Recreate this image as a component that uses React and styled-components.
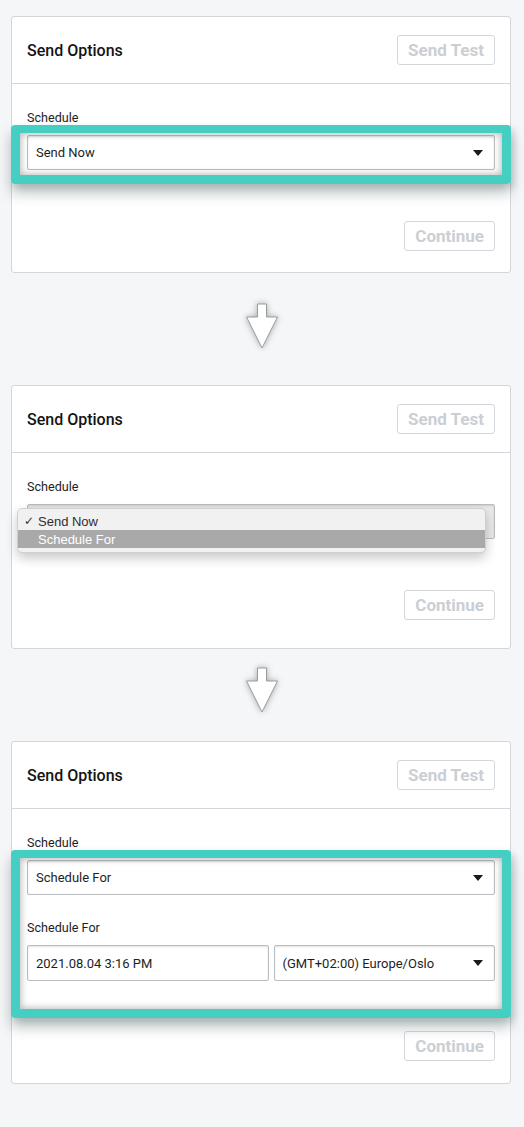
import React from "react";
import styled, { createGlobalStyle } from "styled-components";

const Global = createGlobalStyle`
  html, body { margin: 0; background: #f5f6f8; }
  body { font-family: Roboto, "Liberation Sans", Arial, sans-serif; color: #1c1c1c; }
  * { box-sizing: border-box; }
`;

const Page = styled.div`
  display: flex;
  flex-direction: column;
  padding: 16px 13px 43px 11px;
`;

const Panel = styled.section`
  background: #fff;
  border: 1px solid #d3d6da;
  border-radius: 3px;
`;

const Header = styled.header`
  height: 67px;
  display: flex;
  align-items: center;
  justify-content: space-between;
  padding: 0 15px;
  border-bottom: 1px solid #d3d6da;
`;

const Title = styled.h2`
  margin: 0;
  font-size: 16px;
  font-weight: 500;
  color: #141414;
`;

const GhostButton = styled.button`
  height: 30px;
  padding: 0 10px;
  border: 1px solid #d3d6da;
  border-radius: 3px;
  background: #fff;
  color: #cbcfd3;
  font-family: Roboto, "Liberation Sans", sans-serif;
  font-size: 17px;
  font-weight: 700;
`;

const Body = styled.div`
  display: flex;
  flex-direction: column;
  padding: 27px 15px ${(p) => p.$tail}px;
`;

const Label = styled.label`
  display: block;
  font-size: 12.6px;
  line-height: 14px;
  color: #1e1e1e;
  margin: ${(p) => p.$top || 0}px 0 10px;
`;

const Field = styled.div`
  height: ${(p) => p.$h || 35}px;
  display: flex;
  align-items: center;
  justify-content: space-between;
  padding: 0 11px 0 8px;
  border: 1px solid #b9bdc1;
  border-radius: 2px;
  background: ${(p) => (p.$open ? "#e9e9e9" : "#fff")};
  box-shadow: inset 0 1px 2px rgba(0, 0, 0, 0.12);
  font-size: 13px;
  color: #1e1e1e;
`;

const FieldRow = styled.div`
  display: grid;
  grid-template-columns: 241fr 221fr;
  gap: 5px;
`;

const Highlight = styled.div`
  position: relative;
  display: flex;
  flex-direction: column;
`;

const Frame = styled.div`
  position: absolute;
  top: -10px;
  left: -16px;
  right: -16px;
  bottom: -${(p) => p.$bottom}px;
  border: 9px solid #45cfc3;
  border-top-width: 8px;
  border-radius: 4px;
  box-shadow: 0 9px 14px rgba(40, 70, 70, 0.32), 3px 4px 6px rgba(40, 60, 60, 0.14),
    inset 0 0 7px 1px rgba(0, 0, 0, 0.28);
  pointer-events: none;
  z-index: 2;
`;

const SelectWrap = styled.div`
  position: relative;
`;

const Menu = styled.ul`
  position: absolute;
  top: 4px;
  left: -10px;
  width: 469px;
  margin: 0;
  padding: 3px 0 4px;
  list-style: none;
  background: #f1f1f1;
  border: 1px solid #cfcfcf;
  border-radius: 5px;
  box-shadow: 0 5px 12px rgba(0, 0, 0, 0.22);
  font-family: "Liberation Sans", Arial, sans-serif;
  font-size: 13px;
  z-index: 3;
`;

const MenuItem = styled.li`
  height: 18px;
  display: flex;
  align-items: center;
  padding-left: 6px;
  background: ${(p) => (p.$active ? "#a9a9a9" : "transparent")};
  color: ${(p) => (p.$active ? "#fff" : "#2e2e2e")};
`;

const Check = styled.span`
  width: 14px;
  font-family: "DejaVu Sans", sans-serif;
  font-size: 12px;
  color: #333;
`;

const Footer = styled.div`
  display: flex;
  justify-content: flex-end;
  margin-top: ${(p) => p.$top}px;
`;

const ArrowRow = styled.div`
  display: flex;
  justify-content: center;
  padding: ${(p) => p.$top}px 0 ${(p) => p.$bottom}px 1px;
`;

const ArrowSvg = styled.svg`
  display: block;
  filter: drop-shadow(0 0 3px rgba(60, 80, 80, 0.45));
`;

const Caret = () => (
  <svg width="10" height="6" viewBox="0 0 10 6">
    <path d="M0 0 H10 L5 6 Z" fill="#1a1a1a" />
  </svg>
);

const DownArrow = () => (
  <ArrowSvg width="40" height="52" viewBox="0 0 40 52">
    <path
      d="M15.5 4 H24.5 V17 H35.5 L20 48 L4.5 17 H15.5 Z"
      fill="#fff"
      stroke="#9a9a9a"
      strokeWidth="1"
      strokeLinejoin="round"
    />
  </ArrowSvg>
);

const PanelHeader = () => (
  <Header>
    <Title>Send Options</Title>
    <GhostButton>Send Test</GhostButton>
  </Header>
);

const ContinueFooter = ({ top }) => (
  <Footer $top={top}>
    <GhostButton>Continue</GhostButton>
  </Footer>
);

export default function App() {
  return (
    <>
      <Global />
      <Page>
        <Panel>
          <PanelHeader />
          <Body $tail={21}>
            <Label>Schedule</Label>
            <Highlight>
              <Field>
                <span>Send Now</span>
                <Caret />
              </Field>
              <Frame $bottom={14} />
            </Highlight>
            <ContinueFooter top={51} />
          </Body>
        </Panel>

        <ArrowRow $top={27} $bottom={33}>
          <DownArrow />
        </ArrowRow>

        <Panel>
          <PanelHeader />
          <Body $tail={28}>
            <Label>Schedule</Label>
            <SelectWrap>
              <Field $open>
                <span />
              </Field>
              <Menu>
                <MenuItem>
                  <Check>✓</Check>Send Now
                </MenuItem>
                <MenuItem $active>
                  <Check />
                  Schedule For
                </MenuItem>
              </Menu>
            </SelectWrap>
            <ContinueFooter top={51} />
          </Body>
        </Panel>

        <ArrowRow $top={15} $bottom={25}>
          <DownArrow />
        </ArrowRow>

        <Panel>
          <PanelHeader />
          <Body $tail={22}>
            <Label>Schedule</Label>
            <Highlight>
              <Field>
                <span>Schedule For</span>
                <Caret />
              </Field>
              <Label $top={26}>Schedule For</Label>
              <FieldRow>
                <Field $h={36}>
                  <span>2021.08.04 3:16 PM</span>
                </Field>
                <Field $h={36}>
                  <span>(GMT+02:00) Europe/Oslo</span>
                  <Caret />
                </Field>
              </FieldRow>
              <Frame $bottom={37} />
            </Highlight>
            <ContinueFooter top={50} />
          </Body>
        </Panel>
      </Page>
    </>
  );
}
